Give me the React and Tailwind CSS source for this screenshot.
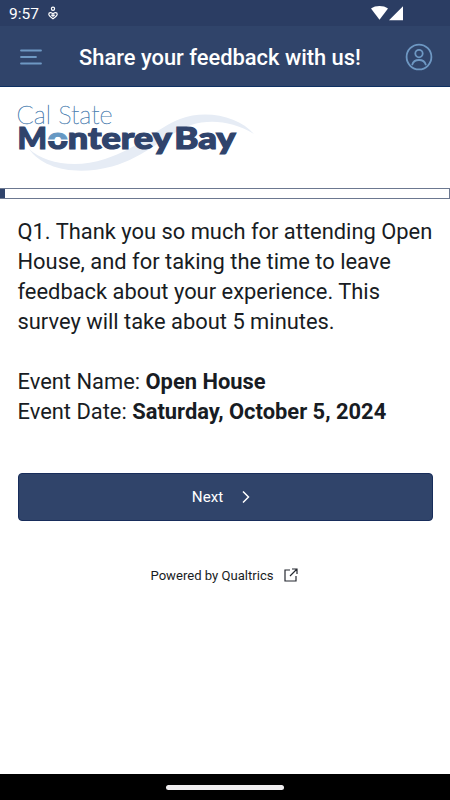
function StatusBar() {
  return (
    <div className="flex h-[26px] items-center bg-[#2b3d63] pl-[9px] text-white">
      <span className="pt-px text-[15.5px] leading-[26px]">9:57</span>
      <svg className="ml-[8px]" width="12" height="14" viewBox="0 0 12 14" fill="none" stroke="#fff" strokeWidth="1.2">
        <circle cx="6" cy="2.800" r="1.600" />
        <path d="M6 8.300C4.800 6 1.800 6.200 1.800 8.300c0 1.400 2 2.900 4.200 4.400 2.200-1.500 4.200-3 4.200-4.400 0-2.100-3-2.300-4.200 0ZM4.300 8.700 6 10.200l1.700-1.500" />
      </svg>
      <svg className="ml-auto mr-[46px]" width="34" height="16" viewBox="0 0 34 16" fill="#fff">
        <path d="M1 3.500C5.500.2 13.500.2 18 3.500L9.500 14.800Z" />
        <path d="M33 1.200v14H19Z" />
      </svg>
    </div>
  );
}

function Header() {
  return (
    <header className="flex h-[61px] items-center border-b border-[#0e3163] bg-[#30446a] pt-[2px] pr-[17px] pl-[20px]">
      <svg width="22" height="18" viewBox="0 0 22 18" stroke="#6e98c3" strokeWidth="1.800" strokeLinecap="round">
        <path d="M1 2.500h20M1 9h15M1 15.500h20" />
      </svg>
      <h1 className="ml-[37px] pt-[2px] text-[21.900px] leading-[28px] font-medium whitespace-nowrap text-white">Share your feedback with us!</h1>
      <svg className="ml-auto" width="28" height="28" viewBox="0 0 28 28" fill="none" stroke="#6e98c3" strokeWidth="1.800">
        <circle cx="14" cy="14" r="12.400" />
        <circle cx="14" cy="10.600" r="3.700" />
        <path d="M7.300 21.500c.8-3 3.500-4.500 6.700-4.500s5.900 1.500 6.700 4.500" strokeLinecap="round" />
      </svg>
    </header>
  );
}

function Logo() {
  return (
    <svg className="block" width="450" height="101" viewBox="0 87 450 101">
      <defs>
        <linearGradient id="split" gradientUnits="userSpaceOnUse" x1="0" y1="130" x2="0" y2="150">
          <stop offset=".47" stopColor="#6698c3" />
          <stop offset=".48" stopColor="#fff" />
          <stop offset=".53" stopColor="#fff" />
          <stop offset=".54" stopColor="#30446c" />
        </linearGradient>
      </defs>
      <path d="M29 149C44 163 75 169 105 159C139 148 157 128 180 119C207 109 239 117 254 134C233 121 210 119 191 125C168 133 144 158 112 166.500C76 176 43 169 29 149Z" fill="#e6ecf5" />
      <text x="16.500" y="124" fontFamily="Lato, sans-serif" fontSize="25" fontWeight="200" fill="#4d80b1" stroke="#4d80b1" strokeWidth=".45" textLength="96" lengthAdjust="spacingAndGlyphs">Cal State</text>
      <g fontFamily="Lato, sans-serif" fontSize="29.500" fontWeight="900" fill="#30446c" stroke="#30446c" strokeWidth="1.200">
        <text x="17.500" y="148.800" textLength="29.500" lengthAdjust="spacingAndGlyphs">M</text>
        <text x="47.500" y="148.800" textLength="20.500" lengthAdjust="spacingAndGlyphs" fill="url(#split)" stroke="url(#split)">o</text>
        <text x="67.800" y="148.800" textLength="104" lengthAdjust="spacingAndGlyphs">nterey</text>
        <text x="174.200" y="148.800" textLength="61.500" lengthAdjust="spacingAndGlyphs">Bay</text>
      </g>
    </svg>
  );
}

export default function App() {
  return (
    <div className="flex h-[800px] w-[450px] flex-col overflow-hidden bg-white font-['Roboto',sans-serif] text-[#181c23]">
      <StatusBar />
      <Header />
      <Logo />
      <div className="h-[11px] border border-[#6c7890] bg-white">
        <div className="-ml-px h-full w-[5px] bg-[#30446c]" />
      </div>
      <main className="px-[17.500px] pt-[18px]">
        <p className="text-[21.900px] leading-[30px] whitespace-nowrap">
          Q1. Thank you so much for attending Open<br />
          House, and for taking the time to leave<br />
          feedback about your experience. This<br />
          survey will take about 5 minutes.<br />
          <br />
          Event Name: <b className="font-bold">Open House</b><br />
          Event Date: <b className="font-bold">Saturday, October 5, 2024</b>
        </p>
        <button className="mt-[46px] flex h-[48px] w-full items-center justify-center rounded-[4px] border border-[#182d5b] bg-[#30446a] pr-[8px] text-[15.200px] text-white">
          <span className="mr-[19px]">Next</span>
          <svg width="8" height="12" viewBox="0 0 8 12" fill="none" stroke="#fff" strokeWidth="1.500"><path d="m1 .5 5.500 5.500L1 11.500" /></svg>
        </button>
        <div className="mt-[45px] flex h-[20px] items-center justify-center pr-[2px] text-[13.100px]">
          <span>Powered by Qualtrics</span>
          <svg className="mb-[2px] ml-[10px]" width="14" height="14" viewBox="0 0 14 14" fill="none" stroke="#252931" strokeWidth="1.200">
            <path d="M6 2H1v11h11V8M8 1h5v5M13 1 6 8" />
          </svg>
        </div>
      </main>
      <footer className="mt-auto flex h-[26px] items-center justify-center bg-black">
        <div className="h-[5px] w-[118px] rounded-full bg-[#efedef]" />
      </footer>
    </div>
  );
}
